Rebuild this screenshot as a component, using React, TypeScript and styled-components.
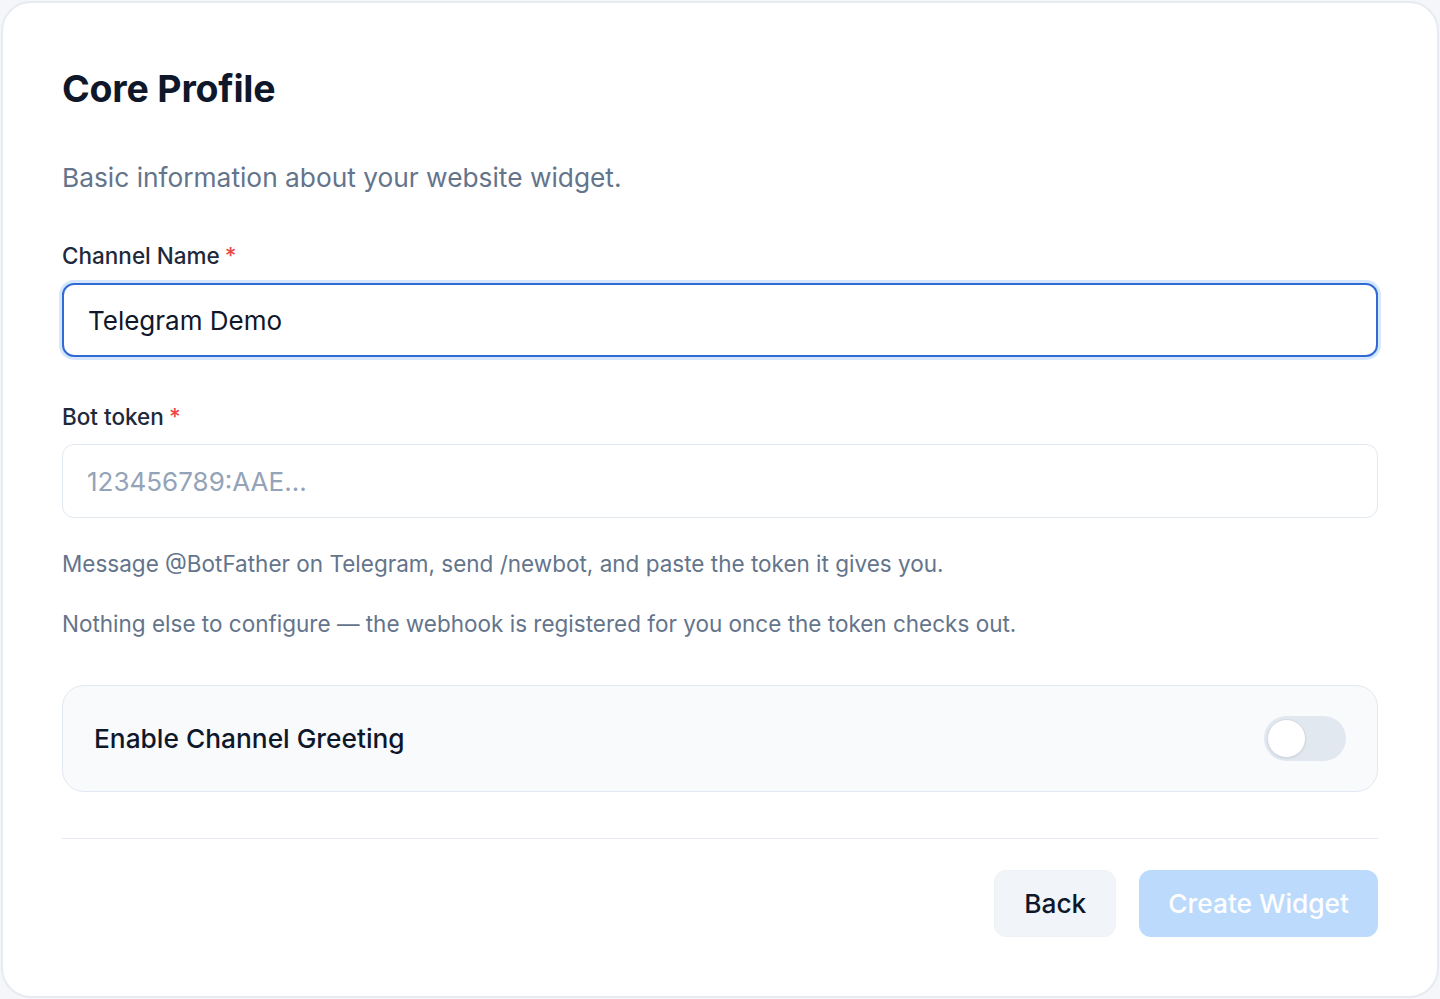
import React, { useState } from 'react';
import styled, { createGlobalStyle } from 'styled-components';

const GlobalStyle = createGlobalStyle`
  html, body {
    margin: 0;
    padding: 0;
    background: #f4f6fa;
  }
  body {
    font-family: Inter, "Noto Sans", "Liberation Sans", sans-serif;
    -webkit-font-smoothing: antialiased;
  }
  * {
    box-sizing: border-box;
  }
`;

const Page = styled.div`
  padding: 1px;
  height: 999px;
`;

const Card = styled.div`
  display: flex;
  flex-direction: column;
  height: 100%;
  background: #ffffff;
  border: 2px solid #e6eaf1;
  border-radius: 30px;
  padding: 64px 59px 0 59px;
`;

const Title = styled.h1`
  margin: 0;
  font-size: 37.5px;
  line-height: 44px;
  font-weight: 700;
  color: #0f172a;
  letter-spacing: -0.2px;
`;

const Subtitle = styled.p`
  margin: 49px 0 0 0;
  font-size: 26.3px;
  line-height: 36px;
  color: #64748b;
`;

const Label = styled.label`
  display: block;
  margin-top: 45px;
  font-size: 22.5px;
  line-height: 30px;
  font-weight: 500;
  color: #1e293b;
`;

const Required = styled.span`
  color: #ef4444;
  margin-left: 5px;
`;

const Input = styled.input<{ $focused?: boolean }>`
  display: block;
  width: 100%;
  height: 74px;
  margin-top: 12px;
  padding: 0 24px;
  font-family: inherit;
  font-size: 26px;
  color: #0f172a;
  background: #ffffff;
  border-radius: 12px;
  outline: none;
  border: ${(p) => (p.$focused ? '2px solid #2f6bd3' : '1.5px solid #e2e8f0')};
  box-shadow: ${(p) => (p.$focused ? '0 0 0 3px #d6e6fc' : 'none')};
  &::placeholder {
    color: #94a3b8;
  }
`;

const Help = styled.p<{ $gap: number }>`
  margin: ${(p) => p.$gap}px 0 0 0;
  font-size: 22.5px;
  line-height: 30px;
  color: #64748b;
`;

const ToggleCard = styled.div`
  display: flex;
  align-items: center;
  justify-content: space-between;
  height: 107px;
  margin-top: 46px;
  padding: 0 31px;
  background: #f8fafc;
  border: 1.5px solid #e2e8f0;
  border-radius: 22px;
`;

const ToggleLabel = styled.span`
  font-size: 26.3px;
  font-weight: 500;
  color: #0f172a;
`;

const Track = styled.button<{ $on: boolean }>`
  position: relative;
  width: 82px;
  height: 45px;
  padding: 0;
  border: none;
  border-radius: 999px;
  background: ${(p) => (p.$on ? '#3b82f6' : '#e2e8f0')};
  cursor: pointer;
`;

const Knob = styled.span<{ $on: boolean }>`
  position: absolute;
  top: 3px;
  left: ${(p) => (p.$on ? 41 : 3)}px;
  width: 39px;
  height: 39px;
  border-radius: 50%;
  background: #ffffff;
  border: 1.5px solid #d3d9e2;
  box-shadow: 0 1px 2px rgba(15, 23, 42, 0.08);
`;

const Divider = styled.hr`
  margin: 46px 0 0 0;
  border: none;
  border-top: 1.5px solid #e5e9ef;
`;

const Actions = styled.div`
  display: flex;
  justify-content: flex-end;
  gap: 23px;
  margin-top: 31px;
`;

const Button = styled.button<{ $primary?: boolean }>`
  height: 67px;
  padding: 0 29px;
  font-family: inherit;
  font-size: 26.3px;
  font-weight: 500;
  border-radius: 12px;
  border: ${(p) => (p.$primary ? 'none' : '1px solid #eef2f6')};
  background: ${(p) => (p.$primary ? '#bcdafc' : '#f1f5f9')};
  color: ${(p) => (p.$primary ? '#ffffff' : '#0f172a')};
  cursor: ${(p) => (p.$primary ? 'not-allowed' : 'pointer')};
`;

export default function App() {
  const [name, setName] = useState('Telegram Demo');
  const [token, setToken] = useState('');
  const [greeting, setGreeting] = useState(false);

  return (
    <>
      <GlobalStyle />
      <Page>
        <Card>
          <Title>Core Profile</Title>
          <Subtitle>Basic information about your website widget.</Subtitle>

          <Label>
            Channel Name<Required>*</Required>
          </Label>
          <Input $focused value={name} onChange={(e) => setName(e.target.value)} />

          <Label>
            Bot token<Required>*</Required>
          </Label>
          <Input
            placeholder="123456789:AAE..."
            value={token}
            onChange={(e) => setToken(e.target.value)}
          />

          <Help $gap={31}>
            Message @BotFather on Telegram, send /newbot, and paste the token it gives you.
          </Help>
          <Help $gap={30}>
            Nothing else to configure — the webhook is registered for you once the token checks out.
          </Help>

          <ToggleCard>
            <ToggleLabel>Enable Channel Greeting</ToggleLabel>
            <Track $on={greeting} onClick={() => setGreeting(!greeting)} aria-pressed={greeting}>
              <Knob $on={greeting} />
            </Track>
          </ToggleCard>

          <Divider />

          <Actions>
            <Button>Back</Button>
            <Button $primary disabled={!token}>
              Create Widget
            </Button>
          </Actions>
        </Card>
      </Page>
    </>
  );
}
